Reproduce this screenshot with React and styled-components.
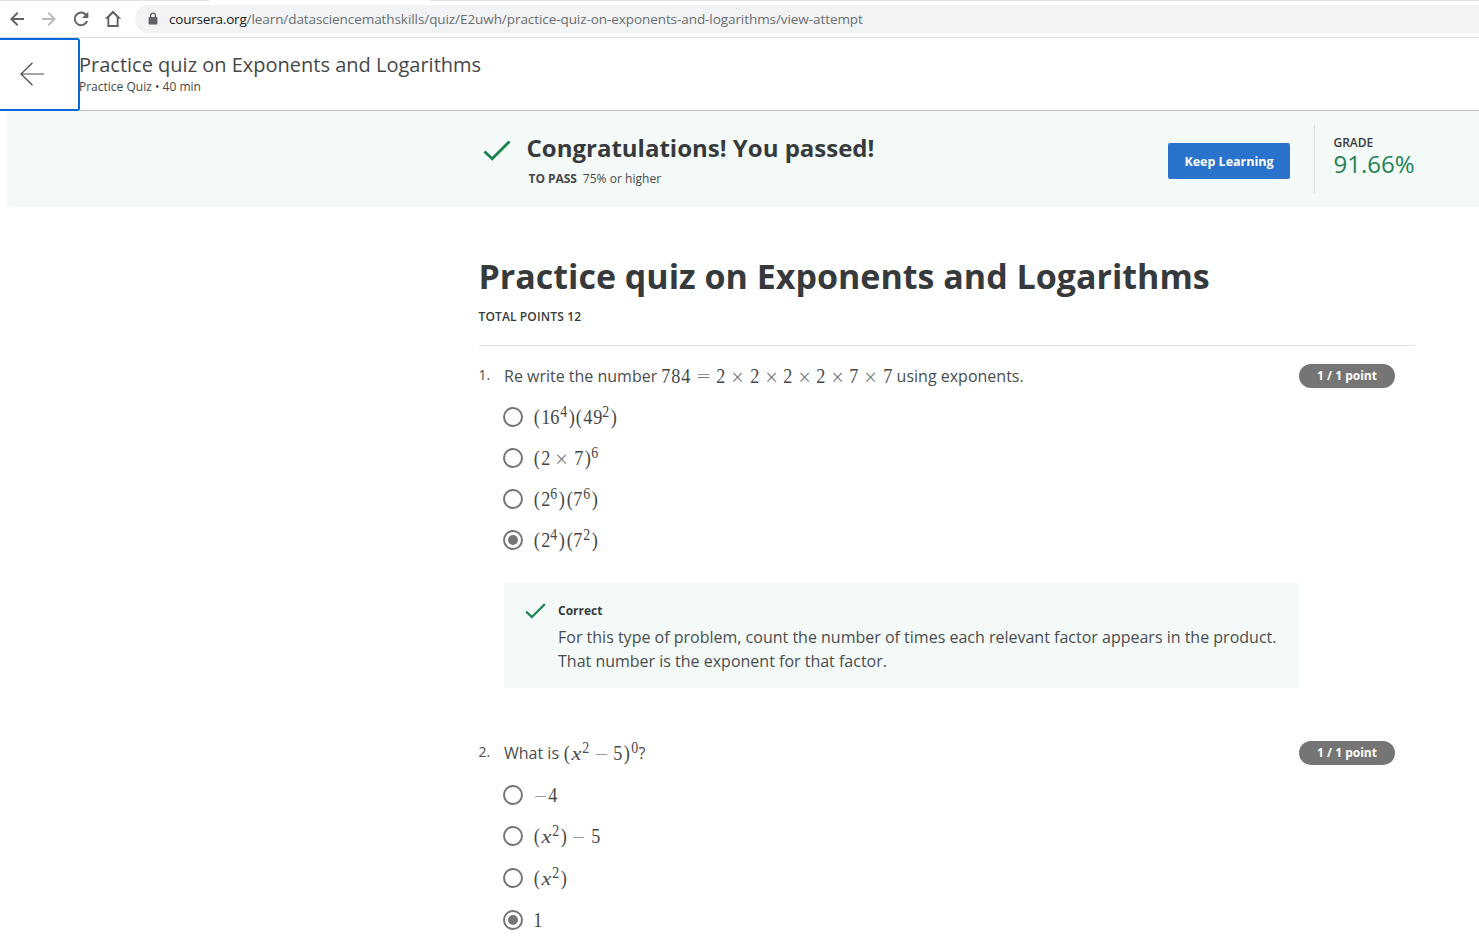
import React from "react";
import styled, { createGlobalStyle } from "styled-components";

const GlobalStyle = createGlobalStyle`
  * { box-sizing: border-box; }
  html, body { margin: 0; padding: 0; }
  body {
    width: 1479px;
    height: 941px;
    overflow: hidden;
    background: #fff;
    color: #373a3c;
    font-family: "Open Sans", "Noto Sans", sans-serif;
  }
  h1, h2, p { margin: 0; }
`;

const Page = styled.div`
  display: flex;
  flex-direction: column;
  width: 1479px;
  height: 941px;
  overflow: hidden;
`;

const TabStrip = styled.div`
  height: 1px;
  flex: none;
  background: linear-gradient(to right, #dee1e6 209px, #fff 209px, #fff 430px, #dee1e6 430px);
`;

const Toolbar = styled.div`
  display: flex;
  align-items: center;
  flex: none;
  height: 37px;
  padding-left: 5px;
  border-bottom: 1px solid #dadce0;
`;

const ToolIcon = styled.svg`
  flex: none;
  width: 24px;
  height: 24px;
  margin-right: 8px;
  fill: ${(p) => (p.$dim ? "#babcbe" : "#5f6368")};
`;

const AddressBar = styled.div`
  display: flex;
  align-items: center;
  flex: 1;
  height: 28px;
  margin-left: 2px;
  padding-left: 11px;
  border-radius: 14px 0 0 14px;
  background: #f1f3f4;
`;

const Lock = styled.svg`
  width: 14px;
  height: 14px;
  margin-right: 9px;
  fill: #5f6368;
`;

const Url = styled.span`
  font-size: 13.5px;
  line-height: 20px;
  letter-spacing: -0.073px;
  white-space: nowrap;
  color: #6b6f73;
`;

const Host = styled.span`
  letter-spacing: -0.2px;
  color: #202124;
`;

const QuizHeader = styled.header`
  display: flex;
  flex: none;
  height: 73px;
  border-bottom: 1px solid #bdbdbd;
`;

const BackButton = styled.button`
  position: relative;
  z-index: 1;
  display: flex;
  align-items: center;
  flex: none;
  width: 81px;
  height: 73px;
  margin-left: -1px;
  padding: 0 0 2px 20px;
  border: 2px solid #0a68d8;
  border-left: 0;
  border-radius: 0 3px 3px 0;
  background: #fff;
`;

const BackArrow = styled.svg`
  width: 26px;
  height: 26px;
  fill: none;
  stroke: #4a4d50;
  stroke-width: 1.2;
`;

const HeaderText = styled.div`
  display: flex;
  flex-direction: column;
  padding-top: 13px;
  margin-left: -1px;
  color: #45484a;
`;

const HeaderTitle = styled.div`
  font-size: 20px;
  line-height: 28px;
  white-space: nowrap;
`;

const HeaderMeta = styled.div`
  font-size: 12px;
  line-height: 16px;
  white-space: nowrap;
`;

const Banner = styled.section`
  display: flex;
  flex: none;
  height: 96px;
  margin-left: 7px;
  padding-left: 476px;
  background: #f4faf8;
`;

const Check = styled.svg`
  flex: none;
  width: ${(p) => p.$size}px;
  height: ${(p) => p.$size * 0.75}px;
  fill: none;
  stroke: #1f8354;
  stroke-width: 2.9;
`;

const BannerText = styled.div`
  width: 641px;
  margin-left: 16px;
  padding-top: 19px;
`;

const BannerTitle = styled.h2`
  margin-left: -0.5px;
  font-size: 24px;
  font-weight: 700;
  line-height: 36px;
  white-space: nowrap;
`;

const PassLine = styled.div`
  display: flex;
  gap: 6px;
  margin: 4px 0 0 1.5px;
  font-size: 12px;
  line-height: 18px;
  letter-spacing: 0.03px;
  color: #45484a;
`;

const Strong = styled.span`
  font-weight: 700;
  letter-spacing: -0.05px;
  color: #45484a;
`;

const KeepButton = styled.button`
  flex: none;
  width: 122px;
  height: 36px;
  margin-top: 32px;
  padding: 1px 0 0;
  border: 0;
  border-radius: 2px;
  background: #2a73cc;
  color: #fff;
  font: 700 12.5px/35px "Open Sans", sans-serif;
`;

const Grade = styled.div`
  height: 68px;
  margin: 14px 0 0 24px;
  padding: 9px 0 0 18.500px;
  border-left: 1px solid #dadfdd;
`;

const GradeLabel = styled.div`
  font-size: 12px;
  font-weight: 600;
  line-height: 17px;
`;

const GradeValue = styled.div`
  font-size: 24px;
  line-height: 26px;
  color: #1f8354;
`;

const Content = styled.main`
  width: 936px;
  margin-left: 479px;
  padding-top: 44px;
`;

const Title = styled.h1`
  margin-left: -0.5px;
  font-size: 34px;
  font-weight: 700;
  line-height: 50px;
  white-space: nowrap;
`;

const Total = styled.div`
  height: 38px;
  margin: 6px 0 0 -0.5px;
  font-size: 12px;
  font-weight: 600;
  line-height: 20px;
  letter-spacing: 0.13px;
`;

const Questions = styled.div`
  border-top: 1px solid #e0e0e0;
`;

const Question = styled.section`
  display: grid;
  grid-template-columns: 25px 795px 96px;
  height: 377px;
  padding-top: 18px;
`;

const Index = styled.div`
  margin-left: -0.5px;
  font-size: 14px;
  line-height: 22px;
  color: #4a4d4f;
`;

const Prompt = styled.div`
  display: flex;
  align-items: center;
  height: 24px;
  font-size: 16px;
  white-space: pre;
  color: #4a4d4f;
`;

const Points = styled.div`
  height: 24px;
  border-radius: 12px;
  background: #757575;
  color: #fff;
  font-size: 12px;
  font-weight: 700;
  line-height: 24px;
  text-align: center;
`;

const Options = styled.div`
  display: flex;
  flex-direction: column;
  gap: ${(p) => p.$gap}px;
  margin: ${(p) => p.$top}px 0 0 -1px;
`;

const Option = styled.label`
  display: flex;
  align-items: center;
  gap: 10px;
  height: 20px;
`;

const Radio = styled.span`
  display: flex;
  align-items: center;
  justify-content: center;
  width: 20px;
  height: 20px;
  border: 2px solid #757575;
  border-radius: 50%;
  &::after {
    content: "";
    width: 10px;
    height: 10px;
    border-radius: 50%;
    background: ${(p) => (p.$on ? "#757575" : "transparent")};
  }
`;

const Feedback = styled.div`
  display: flex;
  height: 105px;
  margin-top: 33px;
  padding: 18px 0 0 21px;
  background: #f4faf8;
`;

const FeedbackText = styled.div`
  margin-left: 12px;
  font-size: 16px;
  line-height: 24px;
  white-space: nowrap;
  color: #4a4d4f;
`;

const FeedbackTitle = styled.div`
  margin-bottom: 4px;
  font-size: 12px;
  font-weight: 700;
  line-height: 20px;
  color: #373a3c;
`;

const MathLine = styled.span`
  display: inline-flex;
  align-items: baseline;
  padding-top: 2px;
  font-family: "Liberation Serif", serif;
  font-size: 19.36px;
  line-height: 24px;
  white-space: pre;
  color: #45484a;
`;

const Digit = styled.span`
  display: inline-block;
  width: 0.5em;
  transform: scale(0.94, 1.03);
`;

const Token = styled.span`
  display: inline-block;
  width: ${(p) => p.$w}em;
  margin: 0 ${(p) => p.$m || 0}em;
  text-align: center;
  font-style: ${(p) => (p.$italic ? "italic" : "normal")};
  color: ${(p) => p.$tone || "inherit"};
  transform: ${(p) => p.$scale || "none"};
`;

const Sup = styled.span`
  display: inline-block;
  width: 8px;
  font-size: 14.5px;
  line-height: 1;
  transform: translateY(-7.5px) scale(0.96, 1.08);
`;

const TOKENS = {
  "(": { $w: 0.389, $scale: "translateY(-0.7px) scale(0.95, 1.12)" },
  ")": { $w: 0.389, $scale: "translateY(-0.7px) scale(0.95, 1.12)" },
  "×": { $w: 0.778, $m: 0.2222, $tone: "#777a7c", $scale: "translateY(1px) scale(1.15)" },
  "=": { $w: 0.778, $m: 0.2778, $tone: "#777a7c", $scale: "scale(1.3, 0.9)" },
  "−": { $w: 0.778, $m: 0.2222, $tone: "#96989a", $scale: "translateY(0.5px) scale(1.2, 1)" },
  "~": { $w: 0.778, $tone: "#96989a", $scale: "translateY(0.5px) scale(1.2, 1)" },
  x: { $w: 0.572, $italic: true, $scale: "scale(1.15, 1)" },
};

function Formula({ children }) {
  const parts = children.match(/\^\d|./g);
  return (
    <MathLine>
      {parts.map((t, i) => {
        if (t[0] === "^") return <Sup key={i}>{t[1]}</Sup>;
        const spec = TOKENS[t];
        return spec ? (
          <Token key={i} {...spec}>{t === "~" ? "−" : t}</Token>
        ) : (
          <Digit key={i}>{t}</Digit>
        );
      })}
    </MathLine>
  );
}

function Choices({ items, chosen, top, gap }) {
  return (
    <Options $top={top} $gap={gap}>
      {items.map((f, i) => (
        <Option key={f}>
          <Radio $on={i === chosen} />
          <Formula>{f}</Formula>
        </Option>
      ))}
    </Options>
  );
}

function CheckMark({ size }) {
  return (
    <Check $size={size} viewBox="0 0 28 21">
      <path d="M1.5 11.5 9.2 18.8 26.5 1.5" />
    </Check>
  );
}

const BannerCheck = styled.div`
  display: flex;
  margin-top: 29px;
`;

const FeedbackCheck = styled.div`
  display: flex;
  margin-top: 2px;
`;

export default function App() {
  return (
    <Page>
      <GlobalStyle />
      <TabStrip />
      <Toolbar>
        <ToolIcon viewBox="0 0 24 24"><path d="M19 11H8.8l4.6-4.6L12 5l-7 7 7 7 1.4-1.4L8.8 13H19z" /></ToolIcon>
        <ToolIcon $dim viewBox="0 0 24 24"><path d="M5 11h10.2l-4.6-4.6L12 5l7 7-7 7-1.4-1.4 4.6-4.6H5z" /></ToolIcon>
        <ToolIcon viewBox="0 0 24 24"><path d="M17.3 6.7A7.3 7.3 0 1 0 19.1 14h-2.2A5.3 5.3 0 1 1 15.8 8.2L13 11h6.3V4.7z" /></ToolIcon>
        <ToolIcon viewBox="0 0 24 24"><path d="M12 3.6 3.8 11.8H6.4V20h11.2v-8.2h2.6zm0 2.9 3.7 3.8V18H8.3v-7.7z" /></ToolIcon>
        <AddressBar>
          <Lock viewBox="0 0 14 14"><path d="M3.6 5.4h.4V4a3 3 0 0 1 6 0v1.4h.4a1 1 0 0 1 1 1V12a1 1 0 0 1-1 1H3.6a1 1 0 0 1-1-1V6.4a1 1 0 0 1 1-1zm1.7 0h3.4V4a1.7 1.7 0 0 0-3.4 0z" transform="translate(0 -.5)" /></Lock>
          <Url><Host>coursera.org</Host>/learn/datasciencemathskills/quiz/E2uwh/practice-quiz-on-exponents-and-logarithms/view-attempt</Url>
        </AddressBar>
      </Toolbar>
      <QuizHeader>
        <BackButton aria-label="Back">
          <BackArrow viewBox="0 0 26 26"><path d="M25 13H2M13.5 1.8 2 13l11.5 11.2" /></BackArrow>
        </BackButton>
        <HeaderText>
          <HeaderTitle>Practice quiz on Exponents and Logarithms</HeaderTitle>
          <HeaderMeta>Practice Quiz • 40 min</HeaderMeta>
        </HeaderText>
      </QuizHeader>
      <Banner>
        <BannerCheck><CheckMark size={28} /></BannerCheck>
        <BannerText>
          <BannerTitle>Congratulations! You passed!</BannerTitle>
          <PassLine><Strong>TO PASS</Strong><span>75% or higher</span></PassLine>
        </BannerText>
        <KeepButton>Keep Learning</KeepButton>
        <Grade>
          <GradeLabel>GRADE</GradeLabel>
          <GradeValue>91.66%</GradeValue>
        </Grade>
      </Banner>
      <Content>
        <Title>Practice quiz on Exponents and Logarithms</Title>
        <Total>TOTAL POINTS 12</Total>
        <Questions>
          <Question>
            <Index>1.</Index>
            <div>
              <Prompt>Re write the number <Formula>784=2×2×2×2×7×7</Formula> using exponents.</Prompt>
              <Choices items={["(16^4)(49^2)", "(2×7)^6", "(2^6)(7^6)", "(2^4)(7^2)"]} chosen={3} top={19} gap={21} />
              <Feedback>
                <FeedbackCheck><CheckMark size={21} /></FeedbackCheck>
                <FeedbackText>
                  <FeedbackTitle>Correct</FeedbackTitle>
                  <p>For this type of problem, count the number of times each relevant factor appears in the product.</p>
                  <p>That number is the exponent for that factor.</p>
                </FeedbackText>
              </Feedback>
            </div>
            <Points>1 / 1 point</Points>
          </Question>
          <Question>
            <Index>2.</Index>
            <div>
              <Prompt>What is <Formula>(x^2−5)^0</Formula>?</Prompt>
              <Choices items={["~4", "(x^2)−5", "(x^2)", "1"]} chosen={3} top={19.7} gap={21.7} />
            </div>
            <Points>1 / 1 point</Points>
          </Question>
        </Questions>
      </Content>
    </Page>
  );
}
